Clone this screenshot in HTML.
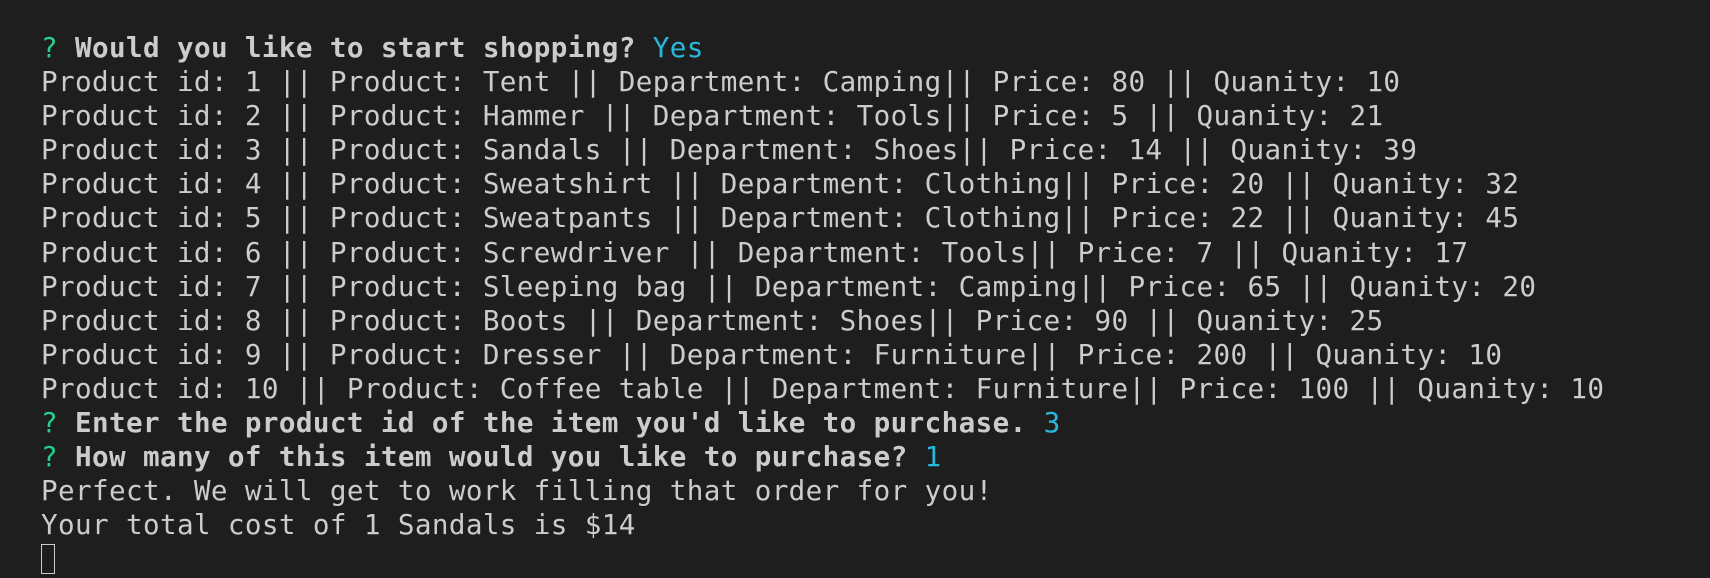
<!DOCTYPE html>
<html><head><style>
html,body{margin:0;background:#1e1e1e;width:1710px;height:578px;overflow:hidden}
pre{margin:0;position:absolute;left:41px;top:31px;font-family:"DejaVu Sans Mono","Liberation Mono",monospace;font-size:27.6px;letter-spacing:0.38px;line-height:34.1px;color:#cccccc}
.g{color:#23d18b}.b{font-weight:bold}.c{color:#29b8db}
.cur{display:inline-block;width:14px;height:30px;border:1.5px solid #cccccc;box-sizing:border-box;vertical-align:-6px}
</style></head><body><pre><span class="g">?</span> <span class="b">Would you like to start shopping?</span> <span class="c">Yes</span>
Product id: 1 || Product: Tent || Department: Camping|| Price: 80 || Quanity: 10
Product id: 2 || Product: Hammer || Department: Tools|| Price: 5 || Quanity: 21
Product id: 3 || Product: Sandals || Department: Shoes|| Price: 14 || Quanity: 39
Product id: 4 || Product: Sweatshirt || Department: Clothing|| Price: 20 || Quanity: 32
Product id: 5 || Product: Sweatpants || Department: Clothing|| Price: 22 || Quanity: 45
Product id: 6 || Product: Screwdriver || Department: Tools|| Price: 7 || Quanity: 17
Product id: 7 || Product: Sleeping bag || Department: Camping|| Price: 65 || Quanity: 20
Product id: 8 || Product: Boots || Department: Shoes|| Price: 90 || Quanity: 25
Product id: 9 || Product: Dresser || Department: Furniture|| Price: 200 || Quanity: 10
Product id: 10 || Product: Coffee table || Department: Furniture|| Price: 100 || Quanity: 10
<span class="g">?</span> <span class="b">Enter the product id of the item you'd like to purchase.</span> <span class="c">3</span>
<span class="g">?</span> <span class="b">How many of this item would you like to purchase?</span> <span class="c">1</span>
Perfect. We will get to work filling that order for you!
Your total cost of 1 Sandals is $14
<span class="cur"></span></pre></body></html>
